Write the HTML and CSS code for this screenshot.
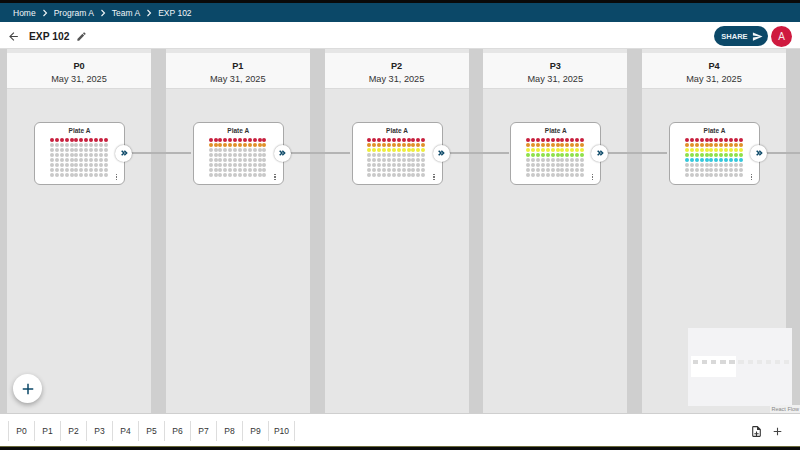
FILE: index.html
```html
<!DOCTYPE html>
<html>
  <head>
    <title>EXP 102</title>
    <link rel="stylesheet" href="styles.css">
  </head>
  <body>
    <div class="app">
      <nav class="crumbs">
        <span>Home</span>
        <svg class="chev" viewBox="0 0 8 8"><path d="M2.5 1 L5.5 4 L2.5 7" /></svg>
        <span>Program A</span>
        <svg class="chev" viewBox="0 0 8 8"><path d="M2.5 1 L5.5 4 L2.5 7" /></svg>
        <span>Team A</span>
        <svg class="chev" viewBox="0 0 8 8"><path d="M2.5 1 L5.5 4 L2.5 7" /></svg>
        <span>EXP 102</span>
      </nav>

      <header class="toolbar">
        <svg class="back" viewBox="0 0 24 24"><path d="M20 11H7.83l5.59-5.59L12 4l-8 8 8 8 1.41-1.41L7.83 13H20v-2z" /></svg>
        <h1 class="title">EXP 102</h1>
        <svg class="edit" viewBox="0 0 24 24"><path d="M3 17.25V21h3.75L17.81 9.94l-3.75-3.75L3 17.25zM20.71 7.04a1 1 0 0 0 0-1.41l-2.34-2.34a1 1 0 0 0-1.41 0l-1.83 1.83 3.75 3.75 1.83-1.83z" /></svg>
        <div class="toolbar-right">
          <button class="share">SHARE
            <svg viewBox="0 0 24 24"><path d="M2 21l21-9L2 3v7l15 2-15 2z" /></svg>
          </button>
          <div class="avatar">A</div>
        </div>
      </header>

      <main class="board" id="board">
        <button class="fab">
          <svg viewBox="0 0 24 24"><path d="M19 13h-6v6h-2v-6H5v-2h6V5h2v6h6v2z" /></svg>
        </button>
        <div class="minimap">
          <div class="minimap-view"></div>
          <div class="minimap-nodes" id="minimap-nodes"></div>
        </div>
        <div class="attribution">React Flow</div>
      </main>

      <footer class="tabs">
        <div class="tab-list" id="tab-list"></div>
        <div class="tab-actions">
          <svg class="file-icon" viewBox="0 0 24 24"><path d="M14 2H6a2 2 0 0 0-2 2v16a2 2 0 0 0 2 2h12a2 2 0 0 0 2-2V8l-6-6zm4 18H6V4h7v5h5v11zm-5-8h-2v3H8v2h3v3h2v-3h3v-2h-3v-3z" /></svg>
          <svg class="add-icon" viewBox="0 0 24 24"><path d="M19 13h-6v6h-2v-6H5v-2h6V5h2v6h6v2z" /></svg>
        </div>
      </footer>
      <div class="bottom-edge"></div>
    </div>

    <script>
      const rowColors = ["#c8203f", "#e0902a", "#eeee3c", "#8ee04a", "#35c8dc"];
      const board = document.getElementById("board");
      const fab = board.querySelector(".fab");

      for (let p = 0; p < 5; p++) {
        let dots = "";
        for (let row = 0; row < 8; row++) {
          for (let col = 0; col < 12; col++) {
            const color = row <= p ? rowColors[row] : "#c9c9c9";
            dots += `<i class="dot" style="background:${color}"></i>`;
          }
        }
        const column = document.createElement("section");
        column.className = "column";
        column.innerHTML = `
          <div class="column-head"><b>P${p}</b><span>May 31, 2025</span></div>
          <div class="plate">
            <div class="plate-name">Plate A</div>
            <div class="wells">${dots}</div>
            <div class="kebab"><i></i><i></i><i></i></div>
            <div class="edge"></div>
            <div class="next">
              <svg viewBox="0 0 24 24"><path d="M5 5 L12 12 L5 19 M13 5 L20 12 L13 19" /></svg>
            </div>
          </div>`;
        board.insertBefore(column, fab);
      }

      const tabList = document.getElementById("tab-list");
      for (let i = 0; i <= 10; i++) {
        const tab = document.createElement("div");
        tab.className = "tab";
        tab.textContent = "P" + i;
        tabList.appendChild(tab);
      }

      const nodes = document.getElementById("minimap-nodes");
      for (let i = 0; i < 11; i++) {
        const node = document.createElement("i");
        if (i < 5) node.className = "on";
        nodes.appendChild(node);
      }
    </script>
  </body>
</html>
```

FILE: styles.css
```css
* {
  box-sizing: border-box;
}

html, body {
  margin: 0;
  height: 100%;
  overflow: hidden;
}

body {
  font-family: "Liberation Sans", Arial, sans-serif;
  color: #222;
}

.app {
  display: flex;
  flex-direction: column;
  height: 450px;
  border-top: 3px solid #0a0a0a;
}

.crumbs {
  display: flex;
  align-items: center;
  height: 19px;
  padding-left: 13px;
  background-color: #0b4868;
  color: #f2f6f8;
  font-size: 8.5px;
}

.chev {
  width: 8px;
  height: 8px;
  margin: 0 5px;
  fill: none;
  stroke: #f2f6f8;
  stroke-width: 1.1;
}

.toolbar {
  display: flex;
  align-items: center;
  height: 26px;
  padding: 2px 8px 0 7px;
  background-color: #fff;
}

.back {
  width: 13px;
  height: 13px;
  fill: #444;
}

.title {
  margin: 0 0 0 9px;
  font-size: 10.3px;
  font-weight: bold;
  color: #1c1c1c;
}

.edit {
  width: 11px;
  height: 11px;
  margin-left: 7px;
  fill: #555;
}

.toolbar-right {
  display: flex;
  align-items: center;
  gap: 3px;
  margin-left: auto;
}

.share {
  display: flex;
  align-items: center;
  justify-content: center;
  gap: 4px;
  width: 54px;
  height: 20px;
  padding: 0 0 0 2px;
  border: none;
  border-radius: 10px;
  background-color: #0b4868;
  color: #e8f2f6;
  font-family: inherit;
  font-size: 7.5px;
  font-weight: bold;
}

.share svg {
  width: 11px;
  height: 11px;
  fill: #f2f6f8;
}

.avatar {
  display: flex;
  align-items: center;
  justify-content: center;
  width: 21px;
  height: 21px;
  border-radius: 50%;
  background-color: #cf1a3f;
  color: #f7e6ea;
  font-size: 10px;
}

.board {
  position: relative;
  flex: 1;
  display: flex;
  gap: 14.75px;
  padding: 0 0 0 7px;
  background-color: #cfcfcf;
  border-top: 1px solid #dcdcdc;
  overflow: hidden;
}

.column {
  flex: none;
  width: 144px;
  padding-top: 4px;
  background-color: #e6e6e6;
}

.column-head {
  display: flex;
  flex-direction: column;
  align-items: center;
  gap: 3px;
  height: 36px;
  padding-top: 8px;
  background-color: #f8f8f8;
  border-bottom: 1px solid #dadada;
  font-size: 9.2px;
  line-height: 10px;
  color: #333;
}

.column-head b {
  color: #222;
}

.plate {
  position: relative;
  width: 91px;
  height: 63px;
  margin: 33px 0 0 27px;
  background-color: #fff;
  border: 1px solid #a8a8a8;
  border-radius: 6px;
}

.plate-name {
  padding-top: 4px;
  text-align: center;
  font-size: 6.5px;
  font-weight: bold;
  line-height: 8px;
  color: #333;
}

.wells {
  display: grid;
  grid-template-columns: repeat(12, 4.9px);
  grid-auto-rows: 4.9px;
  place-items: center;
  margin: 3px 0 0 14.5px;
}

.dot {
  display: block;
  width: 4px;
  height: 4px;
  border-radius: 50%;
}

.kebab {
  position: absolute;
  right: 7px;
  bottom: 4px;
  display: flex;
  flex-direction: column;
  gap: 1px;
}

.kebab i {
  display: block;
  width: 1.5px;
  height: 1.5px;
  background-color: #777;
}

.edge {
  position: absolute;
  left: 96px;
  top: 28.5px;
  width: 60px;
  height: 2px;
  background-color: #b4b4b4;
}

.next {
  position: absolute;
  left: 80px;
  top: 21.5px;
  display: flex;
  align-items: center;
  justify-content: center;
  width: 17px;
  height: 17px;
  border-radius: 50%;
  background-color: #fff;
  box-shadow: 0 0 2px rgba(0, 0, 0, 0.45);
}

.next svg {
  width: 8px;
  height: 8px;
  fill: none;
  stroke: #0b4868;
  stroke-width: 4.5;
}

.fab {
  position: absolute;
  left: 13px;
  top: 325px;
  display: flex;
  align-items: center;
  justify-content: center;
  width: 29px;
  height: 29px;
  padding: 0;
  border: none;
  border-radius: 50%;
  background-color: #fff;
  box-shadow: 0 2px 5px rgba(0, 0, 0, 0.3);
}

.fab svg {
  width: 18px;
  height: 18px;
  fill: #0b4868;
}

.minimap {
  position: absolute;
  left: 688px;
  top: 279px;
  width: 104px;
  height: 78px;
  background-color: #f3f3f5;
}

.minimap-view {
  position: absolute;
  left: 3px;
  top: 28px;
  width: 45px;
  height: 21px;
  background-color: #fff;
}

.minimap-nodes {
  position: absolute;
  left: 5px;
  top: 32px;
  display: flex;
  gap: 3.8px;
}

.minimap-nodes i {
  display: block;
  width: 5.3px;
  height: 4px;
  background-color: #e9e9e9;
}

.minimap-nodes i.on {
  background-color: #d9d9d9;
}

.attribution {
  position: absolute;
  right: 0;
  top: 356px;
  padding: 0 1px;
  background-color: #f0f0f0;
  font-size: 5.5px;
  line-height: 9px;
  color: #888;
}

.tabs {
  display: flex;
  align-items: center;
  height: 33px;
  padding: 2px 16px 0 8px;
  background-color: #fff;
  border-top: 1px solid #cfcfcf;
}

.tab-list {
  display: flex;
  border-left: 1px solid #ddd;
}

.tab {
  width: 26px;
  height: 20px;
  border-right: 1px solid #ddd;
  text-align: center;
  font-size: 8.5px;
  line-height: 20px;
  color: #333;
}

.tab-actions {
  display: flex;
  align-items: center;
  gap: 8px;
  margin-left: auto;
}

.file-icon {
  width: 13px;
  height: 13px;
  fill: #333;
}

.add-icon {
  width: 13px;
  height: 13px;
  fill: #444;
}

.bottom-edge {
  height: 4px;
  background-color: #0a0a0a;
  border-top: 1px solid #6b6a3a;
}
```
